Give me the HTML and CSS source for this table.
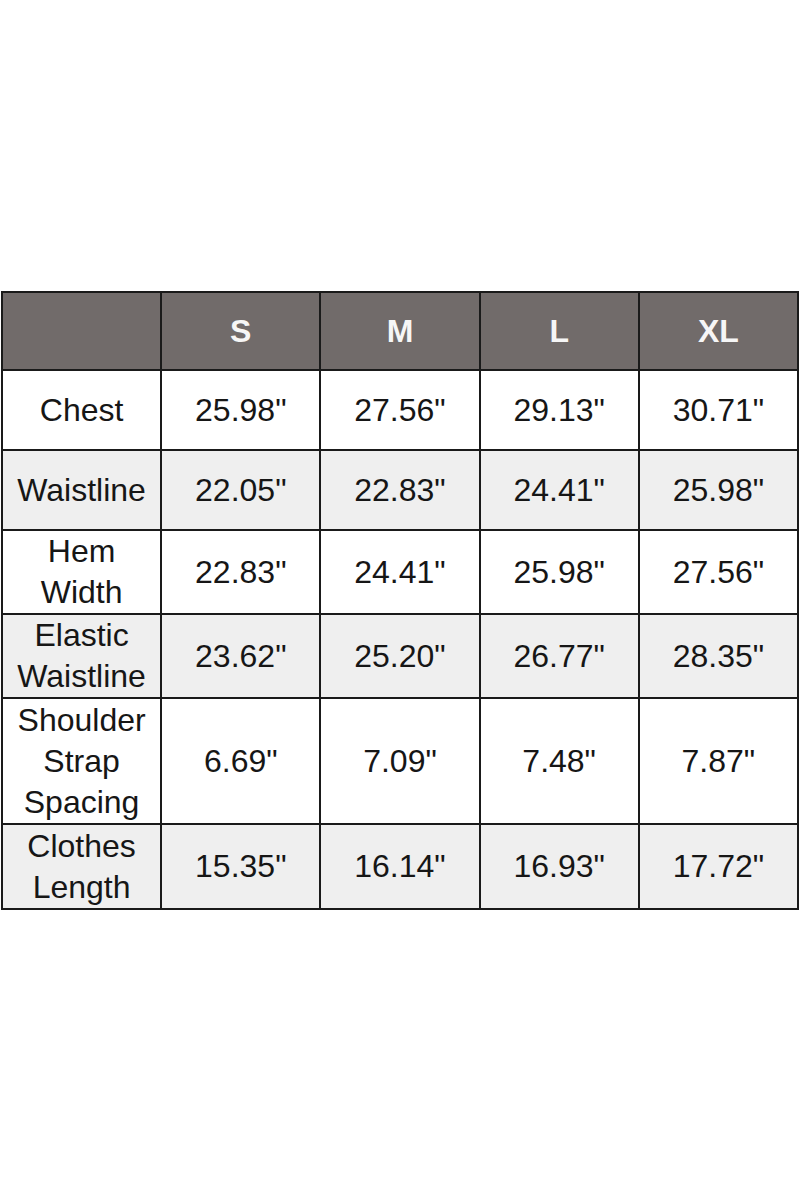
FILE: index.html
```html
<!DOCTYPE html>
<html>
<head>
<meta charset="utf-8">
<link rel="stylesheet" href="styles.css">
</head>
<body>
<div class="page">
  <table class="size-table">
    <thead>
      <tr class="head"><th></th><th>S</th><th>M</th><th>L</th><th>XL</th></tr>
    </thead>
    <tbody>
      <tr class="r1"><td>Chest</td><td>25.98"</td><td>27.56"</td><td>29.13"</td><td>30.71"</td></tr>
      <tr class="r1 alt"><td>Waistline</td><td>22.05"</td><td>22.83"</td><td>24.41"</td><td>25.98"</td></tr>
      <tr class="r2"><td>Hem<br>Width</td><td>22.83"</td><td>24.41"</td><td>25.98"</td><td>27.56"</td></tr>
      <tr class="r2 alt"><td>Elastic<br>Waistline</td><td>23.62"</td><td>25.20"</td><td>26.77"</td><td>28.35"</td></tr>
      <tr class="r3"><td>Shoulder<br>Strap<br>Spacing</td><td>6.69"</td><td>7.09"</td><td>7.48"</td><td>7.87"</td></tr>
      <tr class="r4 alt"><td>Clothes<br>Length</td><td>15.35"</td><td>16.14"</td><td>16.93"</td><td>17.72"</td></tr>
    </tbody>
  </table>
</div>
</body>
</html>
```

FILE: styles.css
```css
html, body {
  margin: 0;
  padding: 0;
  background: #ffffff;
}
.page {
  width: 800px;
  height: 1200px;
  padding-top: 291px;
  box-sizing: border-box;
}
.size-table {
  width: 798px;
  margin-left: 1px;
  border-collapse: collapse;
  table-layout: fixed;
  font-family: "Liberation Sans", Arial, sans-serif;
  font-size: 32px;
  color: #161616;
}
.size-table th,
.size-table td {
  border: 2px solid #1a1a1a;
  text-align: center;
  vertical-align: middle;
  padding: 0;
  line-height: 41px;
}
.head th {
  background: #716b6a;
  color: #f6f6f6;
  font-weight: bold;
  height: 76px;
}
.r1 td { height: 78px; }
.r2 td { height: 82px; }
.r3 td { height: 124px; }
.r4 td { height: 83px; }
.alt td {
  background: #efefef;
}
```
